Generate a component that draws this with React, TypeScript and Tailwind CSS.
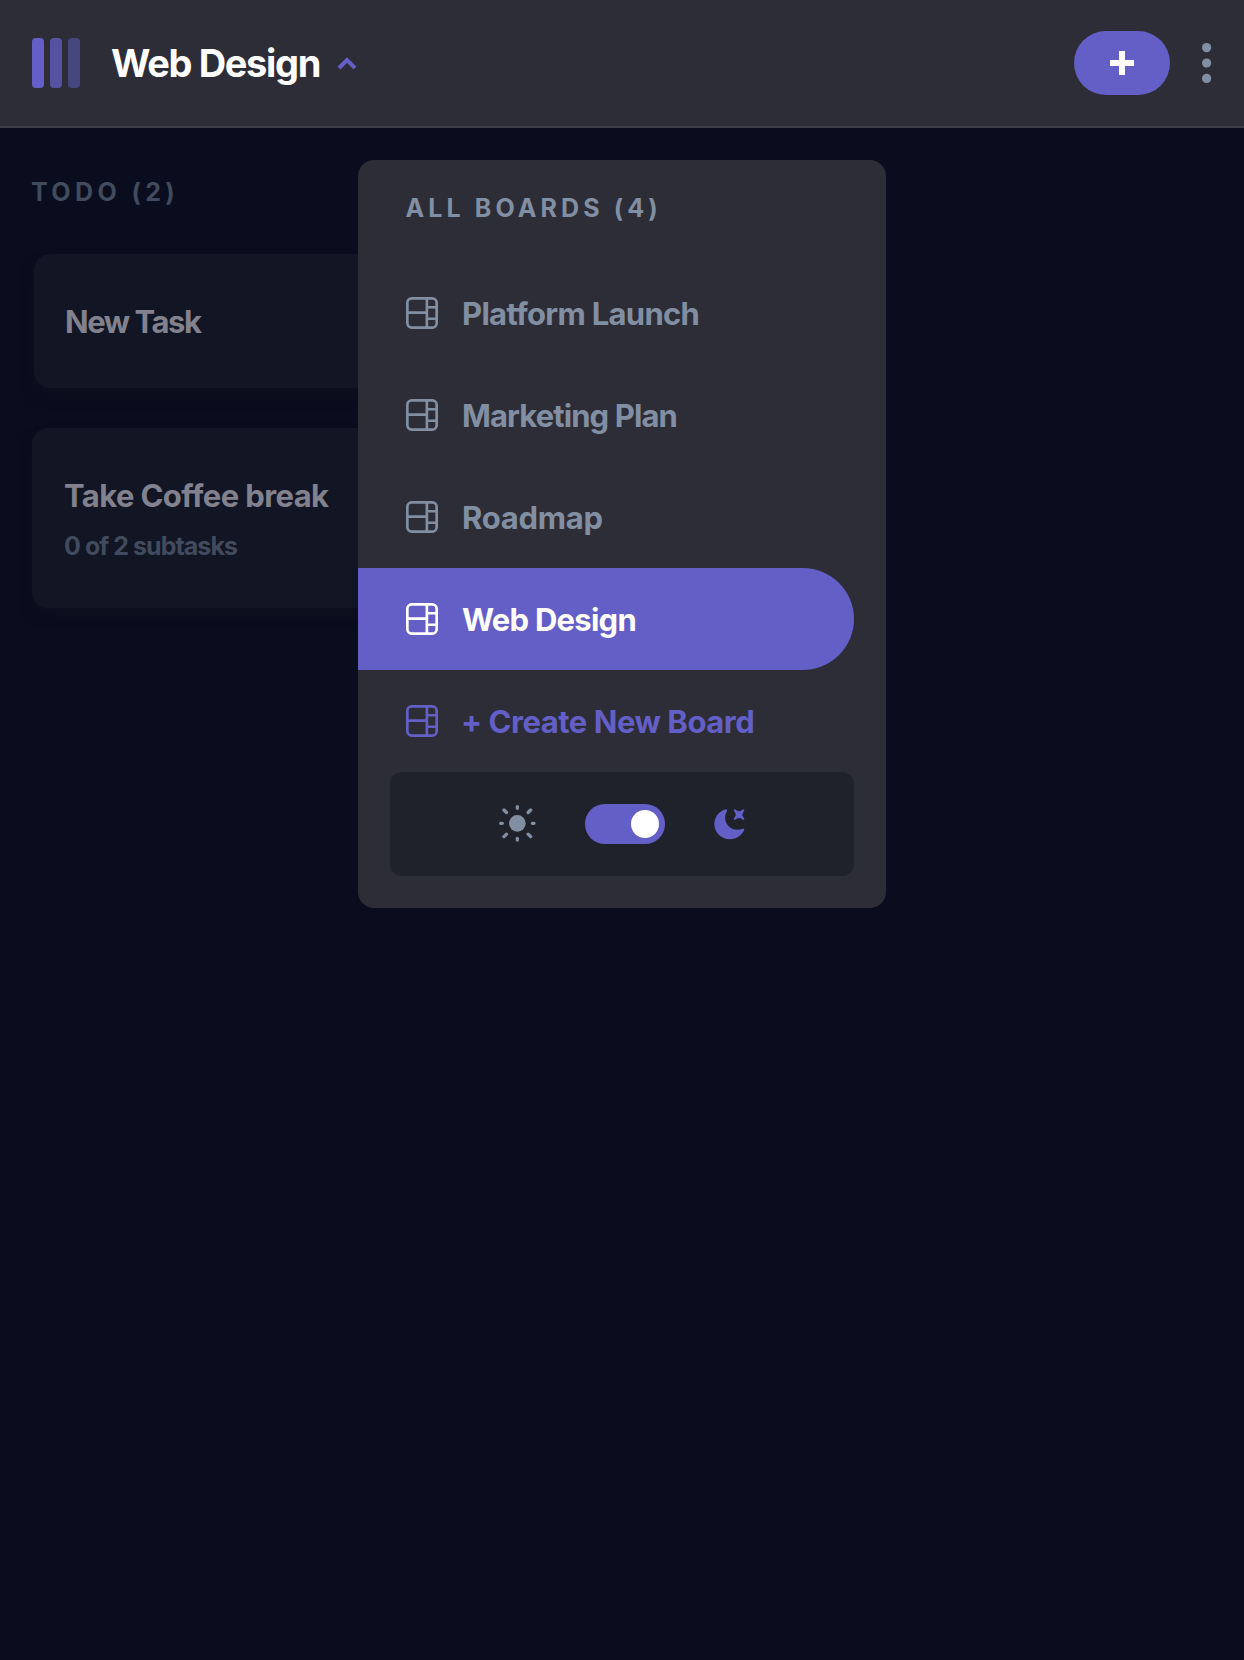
import React from "react";

const boards = [
  { name: "Platform Launch", tracking: "tracking-[-0.7px]" },
  { name: "Marketing Plan", tracking: "tracking-[-0.9px]" },
  { name: "Roadmap", tracking: "tracking-[-0.25px]" },
  { name: "Web Design", tracking: "tracking-[-0.75px]" },
];

function BoardIcon() {
  return (
    <svg className="size-8 shrink-0" viewBox="0 0 16 16" fill="currentColor">
      <path d="M0 2.889A2.889 2.889 0 0 1 2.889 0H13.11A2.889 2.889 0 0 1 16 2.889V13.11A2.888 2.888 0 0 1 13.111 16H2.89A2.889 2.889 0 0 1 0 13.111V2.89Zm1.333 5.555v4.667c0 .859.697 1.556 1.556 1.556h6.889V8.444H1.333Zm8.445-1.333V1.333h-6.89A1.556 1.556 0 0 0 1.334 2.89V7.11h8.445Zm4.889-1.333H11.11v4.444h3.556V5.778Zm0 5.778H11.11v3.11h2a1.556 1.556 0 0 0 1.556-1.555v-1.555Zm0-7.112V2.89a1.555 1.555 0 0 0-1.556-1.556h-2v3.111h3.556Z" />
    </svg>
  );
}

function SunIcon() {
  return (
    <svg className="size-[38px]" viewBox="0 0 38 38" fill="none" stroke="currentColor" strokeWidth="3.33" strokeLinecap="round">
      <circle cx="18.33" cy="18.33" r="8.33" fill="currentColor" stroke="none" />
      <path d="M18.33 1.67v1.66M18.33 33.33V35M1.67 18.33h1.66M33.33 18.33H35M5 5l2.5 2.5M29.17 29.17l2.5 2.5M31.67 5l-2.5 2.5M7.5 29.17 5 31.67" />
    </svg>
  );
}

function MoonIcon() {
  return (
    <svg className="size-8" viewBox="0 0 16 16" fill="currentColor">
      <path d="M6.474.682c.434-.11.718.406.481.78A6.067 6.067 0 0 0 6.01 4.72c0 3.418 2.827 6.187 6.314 6.187.89.002 1.77-.182 2.584-.54.408-.18.894.165.724.57-1.16 2.775-3.944 4.73-7.194 4.73-4.292 0-7.771-3.41-7.771-7.615 0-3.541 2.466-6.518 5.807-7.37Zm8.433.07c.442-.294.969.232.674.674l-.525.787a1.943 1.943 0 0 0 0 2.157l.525.788c.295.441-.232.968-.674.673l-.787-.525a1.943 1.943 0 0 0-2.157 0l-.786.525c-.442.295-.97-.232-.675-.673l.525-.788a1.943 1.943 0 0 0 0-2.157l-.525-.787c-.295-.442.232-.968.674-.673l.787.525a1.943 1.943 0 0 0 2.157 0Z" />
    </svg>
  );
}

function Header() {
  return (
    <header className="flex h-32 items-center border-b-2 border-[#3e3e4b] bg-[#2d2d37] px-8">
      <div className="flex gap-1.5">
        <span className="h-[50px] w-3 rounded-[4px] bg-[#645fc6]" />
        <span className="h-[50px] w-3 rounded-[4px] bg-[#645fc6] opacity-75" />
        <span className="h-[50px] w-3 rounded-[4px] bg-[#645fc6] opacity-50" />
      </div>
      <h1 className="ml-[31px] w-[226px] whitespace-nowrap text-[38px] font-bold leading-[50px] tracking-[-1.35px] text-white">Web Design</h1>
      <svg className="h-3.5 w-5" viewBox="0 0 10 7" fill="none" stroke="#645fc6" strokeWidth="2">
        <path d="M9 6 5 2 1 6" />
      </svg>
      <button className="ml-auto flex h-16 w-24 items-center justify-center rounded-full bg-[#645fc6]">
        <svg className="size-6" viewBox="0 0 24 24" fill="#fff">
          <path d="M9 0h6v9h9v6h-9v9H9v-9H0V9h9z" />
        </svg>
      </button>
      <svg className="ml-8 h-10 w-2.5" viewBox="0 0 5 20" fill="#828fa3">
        <circle cx="2.308" cy="2.308" r="2.308" />
        <circle cx="2.308" cy="10" r="2.308" />
        <circle cx="2.308" cy="17.692" r="2.308" />
      </svg>
    </header>
  );
}

function BoardMenu() {
  return (
    <div className="absolute left-[358px] top-8 flex h-[748px] w-[528px] flex-col rounded-2xl bg-[#2d2d37] pb-8">
      <h2 className="h-[102px] whitespace-nowrap pl-[47.5px] pt-8 text-[25px] font-bold leading-8 tracking-[4.1px] text-[#828fa3]">ALL BOARDS (4)</h2>
      {boards.map(({ name, tracking }) => (
        <div
          key={name}
          className={`mr-8 flex h-[102px] items-center gap-6 rounded-r-full pl-12 ${name === "Web Design" ? "bg-[#645fc6] text-white" : "text-[#828fa3]"}`}
        >
          <BoardIcon />
          <span className={`whitespace-nowrap pt-0.5 text-[31px] font-bold leading-10 ${tracking}`}>{name}</span>
        </div>
      ))}
      <div className="mr-8 flex h-[102px] items-center gap-6 pl-12 text-[#645fc6]">
        <BoardIcon />
        <span className="-ml-px whitespace-nowrap pt-0.5 text-[31px] font-bold leading-10 tracking-[-0.45px]">+ Create New Board</span>
      </div>
      <div className="mx-8 flex h-[104px] items-center rounded-xl bg-[#20222b] pl-[109px]">
        <span className="text-[#828fa3]"><SunIcon /></span>
        <div className="ml-12 flex h-10 w-20 items-center justify-end rounded-full bg-[#645fc6] pr-1.5">
          <span className="size-7 rounded-full bg-white" />
        </div>
        <span className="ml-12 text-[#645fc6]"><MoonIcon /></span>
      </div>
    </div>
  );
}

export default function App() {
  return (
    <div className="h-[1660px] w-[1244px] overflow-hidden bg-[#0a0d1d] font-['Inter',sans-serif]">
      <Header />
      <main className="relative px-8 pt-12">
        <section className="flex w-[560px] flex-col">
          <h2 className="-ml-px h-[78px] whitespace-nowrap text-[25px] font-bold leading-8 tracking-[4.4px] text-[#414b5d]">TODO (2)</h2>
          <article className="ml-[1.5px] flex h-[134px] items-center rounded-2xl bg-[#121524] pl-[31.5px] shadow-[0_8px_12px_#0d0f1f]">
            <h3 className="whitespace-nowrap pt-0.5 text-[31px] font-bold leading-10 tracking-[-1.45px] text-[#82818e]">New Task</h3>
          </article>
          <article className="mt-10 flex h-[180px] flex-col rounded-2xl bg-[#121524] pl-8 pt-12 shadow-[0_8px_12px_#0d0f1f]">
            <h3 className="whitespace-nowrap text-[31px] font-bold leading-10 tracking-[-0.6px] text-[#82818e]">Take Coffee break</h3>
            <p className="mt-3.5 whitespace-nowrap text-[25px] font-bold leading-8 tracking-[-0.95px] text-[#414b5d]">0 of 2 subtasks</p>
          </article>
        </section>
        <BoardMenu />
      </main>
    </div>
  );
}
